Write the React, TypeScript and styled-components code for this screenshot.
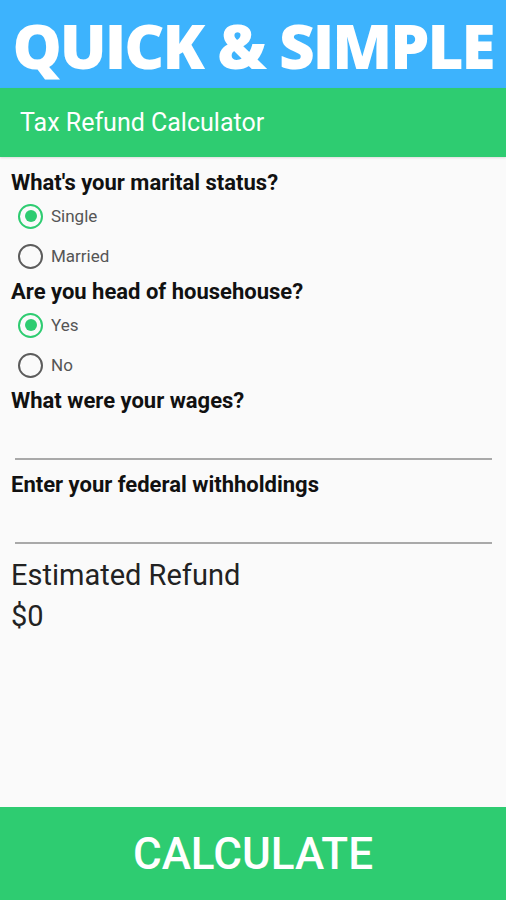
import styled, { createGlobalStyle } from "styled-components";
import { useState } from "react";

const GlobalStyle = createGlobalStyle`
  html, body {
    margin: 0;
    padding: 0;
    background: #fafafa;
  }
  * {
    box-sizing: border-box;
  }
`;

const options = {
  marital: ["Single", "Married"],
  head: ["Yes", "No"],
};

export default function App() {
  const [marital, setMarital] = useState("Single");
  const [head, setHead] = useState("Yes");
  const [wages, setWages] = useState("");
  const [withheld, setWithheld] = useState("");

  return (
    <>
      <GlobalStyle />
      <Page>
        <Banner>QUICK &amp; SIMPLE</Banner>
        <AppBar>Tax Refund Calculator</AppBar>
        <Content>
          <Question>What's your marital status?</Question>
          <RadioGroup>
            {options.marital.map((o) => (
              <RadioRow key={o} onClick={() => setMarital(o)}>
                <Radio checked={marital === o} />
                <RadioLabel>{o}</RadioLabel>
              </RadioRow>
            ))}
          </RadioGroup>
          <Question>Are you head of househouse?</Question>
          <RadioGroup>
            {options.head.map((o) => (
              <RadioRow key={o} onClick={() => setHead(o)}>
                <Radio checked={head === o} />
                <RadioLabel>{o}</RadioLabel>
              </RadioRow>
            ))}
          </RadioGroup>
          <Question>What were your wages?</Question>
          <Field value={wages} onChange={(e) => setWages(e.target.value)} />
          <Question>Enter your federal withholdings</Question>
          <Field value={withheld} onChange={(e) => setWithheld(e.target.value)} />
          <Result>Estimated Refund</Result>
          <Amount>$0</Amount>
        </Content>
        <CalcButton>CALCULATE</CalcButton>
      </Page>
    </>
  );
}

const Page = styled.div`
  min-height: 100vh;
  display: flex;
  flex-direction: column;
  font-family: Roboto, "Noto Sans", sans-serif;
`;

const Banner = styled.div`
  height: 88px;
  background: #3db3fd;
  color: #fff;
  font-family: "Open Sans", sans-serif;
  font-weight: 800;
  font-size: 62px;
  letter-spacing: -2px;
  line-height: 90px;
  text-align: center;
  white-space: nowrap;
  overflow: hidden;
`;

const AppBar = styled.div`
  height: 69px;
  background: #2ecc71;
  color: #fff;
  font-size: 25px;
  font-weight: 400;
  line-height: 69px;
  padding-left: 20px;
  box-shadow: 0 1px 2px rgba(0, 0, 0, 0.12);
`;

const Content = styled.div`
  flex: 1;
  display: flex;
  flex-direction: column;
  padding: 10px 11px 0;
`;

const Question = styled.div`
  margin-top: 3px;
  height: 26px;
  line-height: 26px;
  font-size: 22px;
  font-weight: 700;
  color: #111;
  white-space: nowrap;
`;

const RadioGroup = styled.div`
  display: flex;
  flex-direction: column;
`;

const RadioRow = styled.label`
  height: 40px;
  display: flex;
  align-items: center;
  gap: 8px;
  padding-left: 7px;
  cursor: pointer;
`;

const Radio = styled.span<{ checked: boolean }>`
  width: 25px;
  height: 25px;
  border-radius: 50%;
  border: 2px solid ${({ checked }) => (checked ? "#2ecc71" : "#5c5c5c")};
  display: flex;
  align-items: center;
  justify-content: center;

  &::after {
    content: "";
    width: 12px;
    height: 12px;
    border-radius: 50%;
    background: #2ecc71;
    display: ${({ checked }) => (checked ? "block" : "none")};
  }
`;

const RadioLabel = styled.span`
  font-size: 17px;
  color: #555;
`;

const Field = styled.input`
  margin: 0 3px 9px 4px;
  height: 46px;
  border: none;
  border-bottom: 2px solid #a9a9a9;
  background: transparent;
  font-family: inherit;
  font-size: 18px;
  outline: none;
`;

const Result = styled.div`
  height: 44px;
  line-height: 44px;
  font-size: 29px;
  color: #222;
`;

const Amount = styled.div`
  height: 40px;
  line-height: 38px;
  font-size: 29px;
  color: #222;
`;

const CalcButton = styled.button`
  height: 93px;
  border: none;
  background: #2ecc71;
  color: #fff;
  font-family: Roboto, sans-serif;
  font-size: 44px;
  font-weight: 500;
  cursor: pointer;
`;
